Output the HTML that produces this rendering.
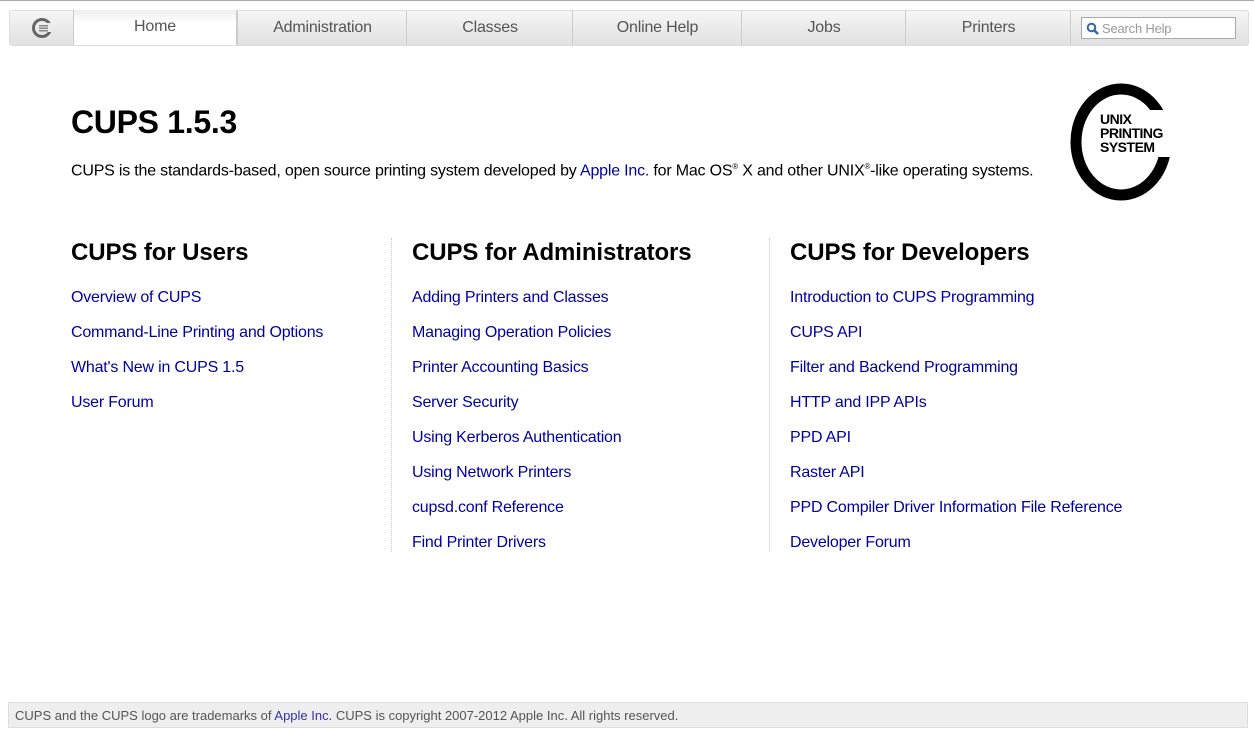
<!DOCTYPE html>
<html><head><style>
body{margin:0;background:#fff;font-family:"Liberation Sans",sans-serif;width:1254px;height:737px;position:relative;overflow:hidden}
.top{position:absolute;left:0;top:0;width:1254px;height:1px;background:#aaa}
.nav{position:absolute;left:9px;top:10px;width:1238px;height:34px;border:1px solid #ddd;border-radius:3px;background:linear-gradient(#f6f6f6,#e8e8e8 60%,#e2e2e2)}
.tab{position:absolute;top:0;height:34px;line-height:33px;text-align:center;font-size:16px;letter-spacing:-0.2px;color:#555;border-left:1px solid #ccc}
.tab.home{background:linear-gradient(#eee,#fff 40%);height:35px;line-height:34px;border-left:1px solid #ccc;border-right:1px solid #ccc;top:-1px;}
a{color:#0000a0;text-decoration:none}
h1{position:absolute;left:71px;top:104px;margin:0;font-size:32px;font-weight:bold;letter-spacing:-0.3px}
.intro{position:absolute;left:71px;top:162px;font-size:16px;color:#000;letter-spacing:-0.2px}
h2{position:absolute;margin:0;font-size:24px;font-weight:bold;top:239px;letter-spacing:-0.1px}
.col{position:absolute;top:280px;font-size:16px;line-height:35px;letter-spacing:-0.2px}
.sep{position:absolute;top:238px;height:314px;border-left:1px dotted #ccc}
.foot{position:absolute;left:8px;top:702px;width:1240px;height:26px;background:#eee;border:1px solid #ddd;font-size:13px;line-height:26px;color:#555;padding-left:6px;box-sizing:border-box}
.foot a{color:#3333a0}
</style></head><body>
<div class="top"></div>
<div class="nav">
 <div class="tab" style="left:0;width:63px;border-left:none">
  <svg width="24" height="24" viewBox="0 0 24 24" style="margin-top:5px"><circle cx="12" cy="12" r="8.5" fill="none" stroke="#666" stroke-width="3"/><rect x="14" y="7" width="8" height="9" fill="#ececec"/><rect x="9" y="9" width="9" height="1.5" fill="#888"/><rect x="9" y="11.5" width="9" height="1.5" fill="#888"/><rect x="9" y="14" width="9" height="1.5" fill="#888"/></svg>
 </div>
 <div class="tab home" style="left:63px;width:162px">Home</div>
 <div class="tab" style="left:227px;width:169px">Administration</div>
 <div class="tab" style="left:396px;width:166px">Classes</div>
 <div class="tab" style="left:562px;width:169px">Online Help</div>
 <div class="tab" style="left:731px;width:164px">Jobs</div>
 <div class="tab" style="left:895px;width:165px">Printers</div>
 <div class="tab" style="left:1060px;width:178px">
  <div style="position:absolute;left:10px;top:6px;width:155px;height:22px;border:1px solid #aaa;background:#fff;font-size:13px;line-height:22px;color:#999;text-align:left;padding-left:20px;box-sizing:border-box">Search Help
   <svg width="14" height="14" style="position:absolute;left:4px;top:4px" viewBox="0 0 14 14"><circle cx="5.5" cy="5.5" r="3.8" fill="none" stroke="#3366aa" stroke-width="2"/><line x1="8.5" y1="8.5" x2="12" y2="12" stroke="#3366aa" stroke-width="2.5"/></svg></div>
 </div>
</div>
<h1>CUPS 1.5.3</h1>
<div class="intro">CUPS is the standards-based, open source printing system developed by <a href="#">Apple Inc.</a> for Mac OS<sup style="font-size:8px">®</sup> X and other UNIX<sup style="font-size:8px">®</sup>-like operating systems.</div>
<svg style="position:absolute;left:1065px;top:80px" width="115" height="125" viewBox="0 0 115 125">
 <ellipse cx="56" cy="62" rx="45" ry="53" fill="none" stroke="#000" stroke-width="11"/>
 <rect x="72" y="30" width="40" height="47" fill="#fff"/>
 <text x="35" y="44" font-family="Liberation Sans" font-weight="bold" font-size="14" letter-spacing="-0.5">UNIX</text>
 <text x="35" y="58" font-family="Liberation Sans" font-weight="bold" font-size="14" letter-spacing="-0.5">PRINTING</text>
 <text x="35" y="72" font-family="Liberation Sans" font-weight="bold" font-size="14" letter-spacing="-0.5">SYSTEM</text>
</svg>
<h2 style="left:71px">CUPS for Users</h2>
<h2 style="left:412px">CUPS for Administrators</h2>
<h2 style="left:790px">CUPS for Developers</h2>
<div class="sep" style="left:391px"></div>
<div class="sep" style="left:769px"></div>
<div class="col" style="left:71px"><a href="#">Overview of CUPS</a><br><a href="#">Command-Line Printing and Options</a><br><a href="#">What's New in CUPS 1.5</a><br><a href="#">User Forum</a></div>
<div class="col" style="left:412px"><a href="#">Adding Printers and Classes</a><br><a href="#">Managing Operation Policies</a><br><a href="#">Printer Accounting Basics</a><br><a href="#">Server Security</a><br><a href="#">Using Kerberos Authentication</a><br><a href="#">Using Network Printers</a><br><a href="#">cupsd.conf Reference</a><br><a href="#">Find Printer Drivers</a></div>
<div class="col" style="left:790px"><a href="#">Introduction to CUPS Programming</a><br><a href="#">CUPS API</a><br><a href="#">Filter and Backend Programming</a><br><a href="#">HTTP and IPP APIs</a><br><a href="#">PPD API</a><br><a href="#">Raster API</a><br><a href="#">PPD Compiler Driver Information File Reference</a><br><a href="#">Developer Forum</a></div>
<div class="foot">CUPS and the CUPS logo are trademarks of <a href="#">Apple Inc.</a> CUPS is copyright 2007-2012 Apple Inc. All rights reserved.</div>
</body></html>
